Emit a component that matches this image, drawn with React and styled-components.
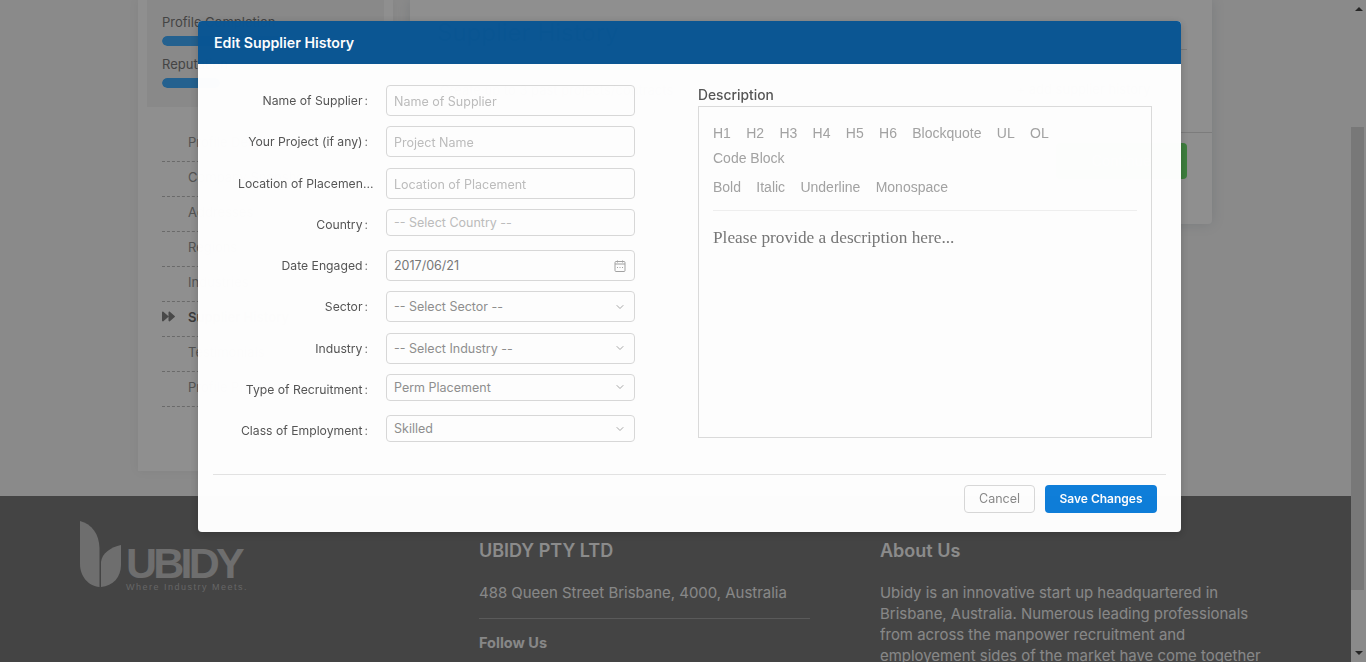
import styled, { createGlobalStyle } from "styled-components";
import { ChevronDown } from "lucide-react";
import { FaForward } from "react-icons/fa";

const GlobalStyle = createGlobalStyle`
    html, body {
        margin: 0;
        height: 100%;
        overflow: hidden;
    }
    * {
        box-sizing: border-box;
    }
    body {
        font-family: Inter, "Open Sans", sans-serif;
    }
`;

const sideItems = [
    "Profile Details",
    "Company Snapshot",
    "Addresses",
    "Regions",
    "Industries",
    "Supplier History",
    "Testimonials",
    "Profile Preview",
];

const fields = [
    { label: "Name of Supplier", type: "input", placeholder: "Name of Supplier" },
    { label: "Your Project (if any)", type: "input", placeholder: "Project Name" },
    { label: "Location of Placement", type: "input", placeholder: "Location of Placement" },
    { label: "Country", type: "select", text: "-- Select Country --", small: true, disabled: true },
    { label: "Date Engaged", type: "date", text: "2017/06/21" },
    { label: "Sector", type: "select", text: "-- Select Sector --" },
    { label: "Industry", type: "select", text: "-- Select Industry --" },
    { label: "Type of Recruitment", type: "select", text: "Perm Placement", small: true },
    { label: "Class of Employment", type: "select", text: "Skilled", small: true },
];

const toolbar = [
    ["H1", "H2", "H3", "H4", "H5", "H6", "Blockquote", "UL", "OL", "Code Block"],
    ["Bold", "Italic", "Underline", "Monospace"],
];

function CalendarIcon() {
    return (
        <svg width="12" height="12" viewBox="0 0 12 12" fill="none" stroke="#a3a3a3" strokeWidth="1">
            <rect x="1" y="1.5" width="10" height="10" rx="1" />
            <path d="M1 4h10M3.5 0.5v2M8.5 0.5v2" />
            <path d="M3 7.5h1M5.5 7.5h1M8 7.5h1" />
        </svg>
    );
}

function LogoMark() {
    return (
        <svg width="42" height="68" viewBox="0 0 42 68" fill="#c4c4c4">
            <path d="M0 1C12 4 19 14 19.5 28L19.5 67C8 66 0 56 0 44Z" />
            <path d="M21 67L21 42C22 33 31 27 41 25L41 45C41 57 33 66 21 67Z" />
        </svg>
    );
}

function Field({ field }) {
    if (field.type === "input") {
        return <TextInput placeholder={field.placeholder} />;
    }
    return (
        <SelectBox $small={field.small} $disabled={field.disabled}>
            <SelectText $date={field.type === "date"}>{field.text}</SelectText>
            {field.type === "date" && <CalendarIcon />}
            {field.type === "select" && !field.disabled && <ChevronDown size={12} color="#a8a8a8" />}
        </SelectBox>
    );
}

export default function App() {
    return (
        <>
            <GlobalStyle />
            <Shell>
                <Page>
                    <TopArea>
                        <Sidebar>
                            <StatsPanel>
                                <StatLabel>Profile Completion</StatLabel>
                                <StatTrack><StatFill style={{ width: "62%" }} /></StatTrack>
                                <StatLabel>Reputation</StatLabel>
                                <StatTrack><StatFill style={{ width: "28%" }} /></StatTrack>
                            </StatsPanel>
                            <SideMenu>
                                {sideItems.map((item) => (
                                    <SideItem key={item} $active={item === "Supplier History"}>
                                        <SideMarker>
                                            {item === "Supplier History" && <FaForward size={13} />}
                                        </SideMarker>
                                        {item}
                                    </SideItem>
                                ))}
                            </SideMenu>
                        </Sidebar>
                        <MainCard>
                            <MainTitle>Supplier History</MainTitle>
                            <MainRow>
                                <MainHint>Create up to 3 past projects/contracts</MainHint>
                                <AddButton>+ add supplier history</AddButton>
                            </MainRow>
                            <MainFooter>
                                <ContinueButton>Continue</ContinueButton>
                            </MainFooter>
                        </MainCard>
                    </TopArea>
                    <Footer>
                        <LogoBlock>
                            <LogoMark />
                            <LogoWords>
                                <LogoName>UBIDY</LogoName>
                                <LogoSlogan>Where Industry Meets.</LogoSlogan>
                            </LogoWords>
                        </LogoBlock>
                        <FooterColumn>
                            <FooterTitle>UBIDY PTY LTD</FooterTitle>
                            <FooterText>488 Queen Street Brisbane, 4000, Australia</FooterText>
                            <FooterRule />
                            <FollowTitle>Follow Us</FollowTitle>
                        </FooterColumn>
                        <FooterColumn>
                            <FooterTitle>About Us</FooterTitle>
                            <FooterText $about>
                                Ubidy is an innovative start up headquartered in Brisbane, Australia. Numerous leading professionals from across the manpower recruitment and employement sides of the market have come together
                            </FooterText>
                        </FooterColumn>
                    </Footer>
                </Page>
                <ScrollRail>
                    <ArrowUp />
                    <ScrollThumb />
                    <ArrowDown />
                </ScrollRail>
            </Shell>
            <Overlay>
                <Modal>
                    <ModalHeader>Edit Supplier History</ModalHeader>
                    <ModalBody>
                        <FormGrid>
                            {fields.map((field) => (
                                <FormRow key={field.label}>
                                    <FieldLabel>{field.label}</FieldLabel>
                                    <Field field={field} />
                                </FormRow>
                            ))}
                        </FormGrid>
                        <DescriptionColumn>
                            <DescriptionLabel>Description</DescriptionLabel>
                            <Editor>
                                <Toolbar>
                                    {toolbar.map((group) => (
                                        <ToolGroup key={group[0]}>
                                            {group.map((tool) => (
                                                <ToolButton key={tool}>{tool}</ToolButton>
                                            ))}
                                        </ToolGroup>
                                    ))}
                                </Toolbar>
                                <EditorPlaceholder>Please provide a description here...</EditorPlaceholder>
                            </Editor>
                        </DescriptionColumn>
                    </ModalBody>
                    <ModalFooter>
                        <CancelButton>Cancel</CancelButton>
                        <SaveButton>Save Changes</SaveButton>
                    </ModalFooter>
                </Modal>
            </Overlay>
        </>
    );
}

const Shell = styled.div`
    display: flex;
    width: 100%;
    height: 662px;
    overflow: hidden;
    background-color: #f6f6f6;
`;

const Page = styled.div`
    flex: 1;
    min-width: 0;
    display: flex;
    flex-direction: column;
`;

const TopArea = styled.div`
    height: 496px;
    flex-shrink: 0;
    display: flex;
    align-items: flex-start;
    padding-left: 138px;
`;

const Sidebar = styled.div`
    width: 255px;
    height: 471px;
    background-color: #ffffff;
    padding: 0 9px;
    box-shadow: 0 0 10px rgba(0, 0, 0, 0.06);
`;

const StatsPanel = styled.div`
    height: 107px;
    background-color: #f4f4f4;
    padding: 14px 15px 0;
`;

const StatLabel = styled.div`
    font-size: 13px;
    line-height: 16px;
    color: #7a7a7a;
    margin-bottom: 6px;
`;

const StatTrack = styled.div`
    height: 10px;
    margin-bottom: 10px;
    border-radius: 5px;
    background-color: #f4f4f4;
    overflow: hidden;
`;

const StatFill = styled.div`
    height: 100%;
    border-radius: 5px;
    background-color: #40aeff;
`;

const SideMenu = styled.div`
    padding: 20px 15px 0;
`;

const SideItem = styled.div`
    height: 35px;
    padding-bottom: 5px;
    display: flex;
    align-items: center;
    border-bottom: 1px dashed #bdbdbd;
    font-size: 13px;
    font-weight: ${(props) => (props.$active ? 600 : 400)};
    color: ${(props) => (props.$active ? "#6a6a6a" : "#949494")};
`;

const SideMarker = styled.span`
    width: 26px;
    display: flex;
    color: #808080;
`;

const MainCard = styled.div`
    width: 802px;
    height: 224px;
    margin-left: 17px;
    background-color: #ffffff;
    border-radius: 0 0 4px 4px;
    box-shadow: 0 0 14px rgba(40, 70, 90, 0.14);
`;

const MainTitle = styled.div`
    height: 50px;
    margin: 0 25px 0 27px;
    padding-top: 18px;
    font-size: 24px;
    line-height: 30px;
    color: #4a6a8a;
    border-bottom: 1px solid #dddddd;
`;

const MainRow = styled.div`
    height: 83px;
    padding: 27px 40px 0 30px;
    display: flex;
    justify-content: space-between;
    border-bottom: 1px solid #dddddd;
`;

const MainHint = styled.div`
    font-size: 13px;
    line-height: 26px;
    color: #8a8a8a;
`;

const AddButton = styled.div`
    width: 177px;
    height: 25px;
    background-color: #eeeeee;
    font-size: 13px;
    line-height: 25px;
    text-align: center;
    color: #8a8a8a;
`;

const MainFooter = styled.div`
    display: flex;
    justify-content: flex-end;
    padding: 10px 25px 0;
`;

const ContinueButton = styled.div`
    width: 131px;
    height: 36px;
    border-radius: 4px;
    background-color: #6fe06f;
    color: #ffffff;
    font-size: 14px;
    line-height: 36px;
    text-align: center;
`;

const Footer = styled.div`
    flex: 1;
    background-color: #797979;
    display: flex;
    padding-left: 80px;
    color: #ffffff;
`;

const LogoBlock = styled.div`
    width: 399px;
    flex-shrink: 0;
    display: flex;
    padding-top: 24px;
    gap: 4px;
`;

const LogoWords = styled.div`
    padding-top: 24px;
`;

const LogoName = styled.div`
    font-family: "Liberation Sans", sans-serif;
    font-weight: 700;
    font-size: 43px;
    line-height: 38px;
    letter-spacing: -3.8px;
    color: #c4c4c4;
`;

const LogoSlogan = styled.div`
    font-family: "Liberation Sans", sans-serif;
    font-size: 9px;
    line-height: 10px;
    letter-spacing: 1.5px;
    white-space: nowrap;
    color: #b6b6b6;
`;

const FooterColumn = styled.div`
    width: 401px;
    flex-shrink: 0;
    padding-top: 43px;
    padding-right: 10px;
`;

const FooterTitle = styled.div`
    font-size: 18px;
    font-weight: 600;
    line-height: 24px;
    margin-bottom: 20px;
    opacity: 0.95;
`;

const FooterText = styled.div`
    margin-top: ${(props) => (props.$about ? "1px" : "0")};
    font-size: 14.95px;
    line-height: 21px;
    opacity: 0.9;
`;

const FooterRule = styled.div`
    height: 1px;
    width: 331px;
    margin-top: 14px;
    background-color: #ffffff;
    opacity: 0.3;
`;

const FollowTitle = styled.div`
    margin-top: 14px;
    font-size: 14.5px;
    font-weight: 700;
    line-height: 20px;
    opacity: 0.9;
`;

const ScrollRail = styled.div`
    width: 15px;
    flex-shrink: 0;
    display: flex;
    flex-direction: column;
    align-items: flex-start;
    background-color: #f6f6f6;
    padding-top: 7px;
`;

const ArrowUp = styled.div`
    margin-left: 4px;
    border-left: 4px solid transparent;
    border-right: 4px solid transparent;
    border-bottom: 4px solid #444444;
`;

const ScrollThumb = styled.div`
    width: 13px;
    height: 463px;
    margin-top: 116px;
    background-color: #d6d6d6;
`;

const ArrowDown = styled.div`
    margin: 61px 0 0 4px;
    border-left: 4px solid transparent;
    border-right: 4px solid transparent;
    border-top: 4px solid #444444;
`;

const Overlay = styled.div`
    position: fixed;
    inset: 0;
    background-color: rgba(0, 0, 0, 0.44);
    padding: 21px 0 0 198px;
`;

const Modal = styled.div`
    width: 983px;
    height: 511px;
    display: flex;
    flex-direction: column;
    background-color: #ffffff;
    border-radius: 4px;
    overflow: hidden;
    opacity: 0.985;
    box-shadow: 0 2px 8px rgba(0, 0, 0, 0.2);
`;

const ModalHeader = styled.div`
    height: 43px;
    flex-shrink: 0;
    padding: 0 16px;
    background-color: #0a5694;
    color: #ffffff;
    font-size: 14.2px;
    font-weight: 600;
    line-height: 43px;
`;

const ModalBody = styled.div`
    flex: 1;
    display: flex;
    padding: 21px 0 0 40px;
`;

const FormGrid = styled.div`
    width: 397px;
    flex-shrink: 0;
    display: flex;
    flex-direction: column;
`;

const FormRow = styled.div`
    height: 41.25px;
    display: grid;
    grid-template-columns: 138px 249px;
    column-gap: 10px;
    align-items: start;
`;

const FieldLabel = styled.label`
    display: block;
    height: 31px;
    font-size: 12.2px;
    line-height: 31px;
    color: #555555;
    text-align: right;
    white-space: nowrap;
    overflow: hidden;
    text-overflow: ellipsis;
    &::after {
        content: ":";
        margin: 0 8px 0 2px;
        color: #777777;
    }
`;

const TextInput = styled.input`
    width: 100%;
    height: 31px;
    padding: 2px 7px 0;
    border: 1px solid #d9d9d9;
    border-radius: 4px;
    outline: none;
    background-color: #ffffff;
    font-family: inherit;
    font-size: 12.5px;
    &::placeholder {
        color: #bdbdbd;
        opacity: 1;
    }
`;

const SelectBox = styled.div`
    height: ${(props) => (props.$small ? "27px" : "31px")};
    padding: 0 8px 0 7px;
    display: flex;
    align-items: center;
    justify-content: space-between;
    border: 1px solid #d9d9d9;
    border-radius: 4px;
    background-color: #ffffff;
    color: ${(props) => (props.$disabled ? "#bdbdbd" : "#8f8f8f")};
    font-size: 12.5px;
`;

const SelectText = styled.span`
    color: ${(props) => (props.$date ? "#777777" : "inherit")};
`;

const DescriptionColumn = styled.div`
    margin-left: 63px;
    width: 454px;
    margin-top: 1px;
`;

const DescriptionLabel = styled.div`
    height: 20px;
    font-size: 13.8px;
    font-weight: 500;
    line-height: 19px;
    color: #555555;
`;

const Editor = styled.div`
    height: 332px;
    border: 1px solid #dcdcdc;
    padding: 14px 14px 0;
`;

const Toolbar = styled.div`
    padding-bottom: 10px;
    border-bottom: 1px solid #f0f0f0;
`;

const ToolGroup = styled.div`
    max-width: 350px;
    display: flex;
    flex-wrap: wrap;
    column-gap: 15.3px;
    margin-bottom: 4px;
    &:last-child {
        margin-bottom: 0;
    }
`;

const ToolButton = styled.span`
    font-family: "Liberation Sans", sans-serif;
    font-size: 14px;
    line-height: 25px;
    color: #a3a3a3;
`;

const EditorPlaceholder = styled.div`
    margin-top: 15px;
    font-family: "Liberation Serif", serif;
    font-size: 17.3px;
    line-height: 24px;
    color: #777777;
`;

const ModalFooter = styled.div`
    height: 58px;
    flex-shrink: 0;
    margin: 0 15px;
    padding: 10px 9px 0;
    display: flex;
    justify-content: flex-end;
    gap: 10px;
    border-top: 1px solid #e4e4e4;
`;

const CancelButton = styled.button`
    width: 71px;
    height: 28px;
    padding: 0 0 2px;
    border: 1px solid #d9d9d9;
    border-radius: 4px;
    background-color: #ffffff;
    color: #8a8a8a;
    font-family: inherit;
    font-size: 12.5px;
`;

const SaveButton = styled.button`
    width: 112px;
    height: 28px;
    padding: 0 0 2px;
    border: none;
    border-radius: 4px;
    background-color: #0e7edb;
    color: #ffffff;
    font-family: inherit;
    font-size: 12px;
    font-weight: 600;
`;
